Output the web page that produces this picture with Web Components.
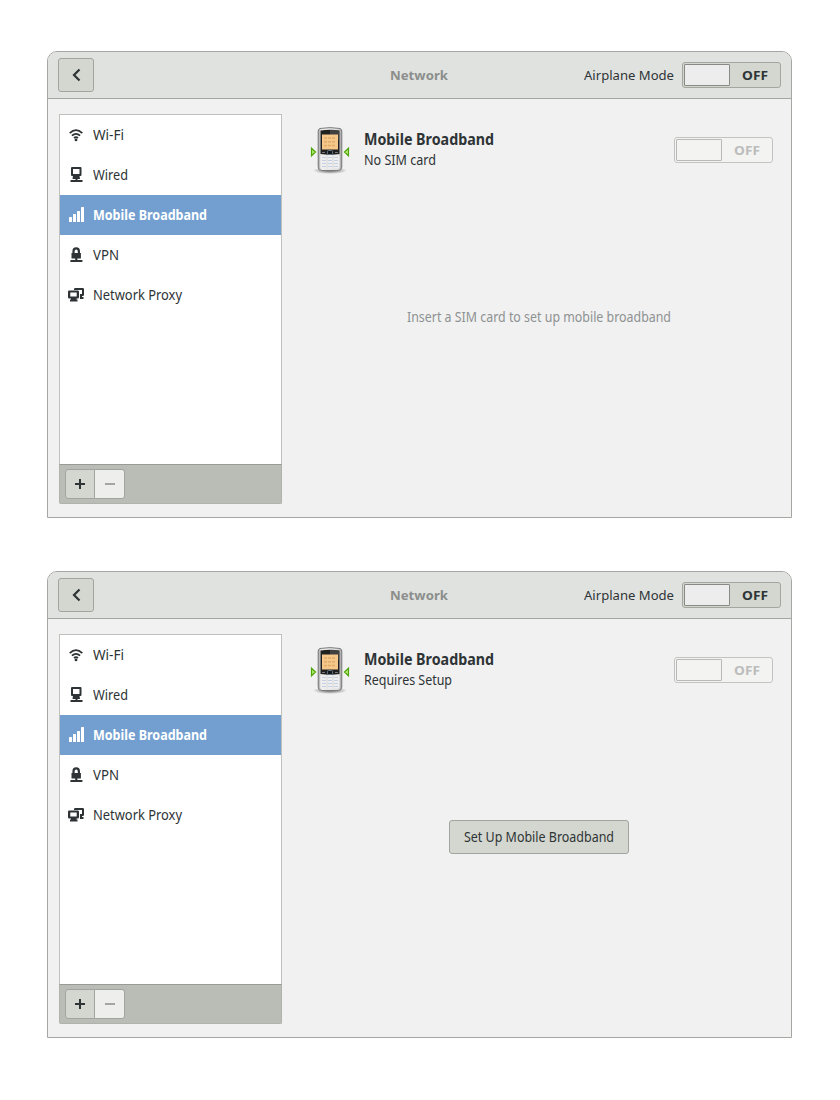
<!DOCTYPE html>
<html lang="en"><head><meta charset="utf-8"><title>Network</title>
<style>
body{margin:0;padding:51px 47px 0;background:#fff;font:13.5px/20px "Noto Sans","Open Sans",sans-serif;color:#2e3436;display:flex;flex-direction:column;gap:53px}
</style></head><body>
<net-window><fit-text slot="status" w="72">No SIM card</fit-text>
<fit-text slot="body" w="264" style="color:#8e9192">Insert a SIM card to set up mobile broadband</fit-text></net-window>
<net-window><fit-text slot="status" w="88">Requires Setup</fit-text>
<gtk-button slot="body" style="width:180px;height:34px"><fit-text w="150">Set Up Mobile Broadband</fit-text></gtk-button></net-window>
<script>
class Base extends HTMLElement{
  constructor(){super();this.attachShadow({mode:'open'}).innerHTML=this.constructor.html;}
}
/* Text drawn at a given advance width */
customElements.define('fit-text',class extends Base{
  static html=`<style>:host{display:block;white-space:nowrap;flex:none}span{display:inline-block;transform-origin:0 50%}</style><span><slot></slot></span>`;
  connectedCallback(){
    const s=this.shadowRoot.querySelector('span'),w=+this.getAttribute('w');
    this.style.width=w+'px';
    requestAnimationFrame(()=>{const n=s.offsetWidth;if(n)s.style.transform=`scaleX(${w/s.getBoundingClientRect().width})`;});
  }
});
customElements.define('gtk-button',class extends Base{
  static html=`<style>:host{display:flex;box-sizing:border-box;align-items:center;justify-content:center;border:1px solid #a1a5a0;border-radius:3px;background:#d4d7cf}</style><slot></slot>`;
});
customElements.define('gtk-switch',class extends Base{
  static html=`<style>
  :host{display:flex;box-sizing:border-box;width:99px;height:26px;border:1px solid #a3a79f;border-radius:3px;background:#d4d7cf;padding:1px;flex:none;align-items:center;font-weight:700;font-size:12.5px}
  i{box-sizing:border-box;width:46px;height:22px;border:1px solid #888a85;border-radius:1px;background:#ededed}
  fit-text{margin-left:11.5px;padding-top:2px}
  :host([disabled]){background:#f3f3f2;border-color:#c3c4c2;color:#bbbcbb}
  :host([disabled]) i{background:#f3f3f2;border-color:#b8bab7}
  </style><i></i><fit-text w="26">OFF</fit-text>`;
});
const icons={
wifi:`<path d="M1.700 6.100Q8 .2 14.300 6.100M3.900 8.700Q8 5 12.100 8.700M6 11Q8 9.300 10 11" fill="none" stroke="currentColor" stroke-width="1.800"/><circle cx="8" cy="12.900" r="1.400"/>`,
wired:`<path fill-rule="evenodd" d="M4 0h8.500Q13.500 0 13.500 1v7q0 1-1 1H4Q3 9 3 8V1Q3 0 4 0zM5 2v5h6.500V2z"/><path d="M5 8.500h6.500l.5 3.500H9.500V13h5v2h-12v-2h5v-1H4.500z"/>`,
signal:`<path d="M0 10.500q0-.5.5-.5h2q.5 0 .5.5V15H0zM4 7.500q0-.5.5-.5h2q.5 0 .5.5V15H4zM8 4.500q0-.5.5-.5h2q.5 0 .5.5V15H8zM12 .5q0-.5.5-.5h2q.5 0 .5.5V15h-3z" transform="translate(1)"/>`,
vpn:`<path fill-rule="evenodd" d="M3.500 6h.9V4.500a3.800 4.200 0 0 1 7.600 0V6h.9v5.500H9.400V13h5v2H2.400v-2h4.800v-1.500H3.500zM6.600 6h3.200V4.600a1.600 2 0 0 0-3.200 0z"/>`,
proxy:`<path fill-rule="evenodd" d="M1.200 3.500h8.600q1.200 0 1.200 1.200v5.600q0 1.200-1.200 1.200H8.500V12.500h1V14.500H2v-2h1V11.500H1.200Q0 11.500 0 10.300V4.700Q0 3.500 1.200 3.500zM2.300 5.500v4h6.400v-4z"/><path d="M6 3V2.200Q6 1 7.200 1h7.600Q16 1 16 2.200v5.600Q16 9 14.800 9H14v1h1.500v2H12V7h2V3z"/>`};
customElements.define('net-row',class extends Base{
  static html=`<style>:host{display:flex;height:40px;align-items:center;padding-left:8px;gap:8.500px}svg{width:16px;height:16px;fill:currentColor;flex:none}
  :host([selected]){background:#729fcf;color:#fff;font-weight:700}slot{display:block}</style><svg viewBox="0 0 16 16"></svg><slot></slot>`;
  connectedCallback(){this.shadowRoot.querySelector('svg').innerHTML=icons[this.getAttribute('icon')];}
});
customElements.define('phone-icon',class extends Base{
  static html=`<style>:host{display:block;width:40px;height:48px;flex:none}svg{display:block}</style>
  <svg width="40" height="48" viewBox="0 0 40 48"><defs>
  <linearGradient id="m"><stop stop-color="#999"/><stop offset=".13" stop-color="#eee"/><stop offset=".85" stop-color="#ddd"/><stop offset="1" stop-color="#999"/></linearGradient>
  <radialGradient id="s"><stop stop-color="#000" stop-opacity=".6"/><stop offset="1" stop-color="#000" stop-opacity="0"/></radialGradient></defs>
  <ellipse cx="20" cy="44.500" rx="17" ry="3.500" fill="url(#s)"/>
  <path d="M10 2.500Q20 .7 30 2.500Q31.800 3 31.800 5V41Q31.800 44.500 28 44.500H12Q8.200 44.500 8.200 41V5Q8.200 3 10 2.500z" fill="url(#m)" stroke="#7c7c7c"/>
  <path d="M10.500 4.500Q20 3 29.500 4.500V28Q20 29.500 10.500 28z" fill="#202020"/><path d="M20 4Q26 3.800 29 4.500V14L20 20z" fill="#555" opacity=".6"/>
  <rect x="12" y="8.500" width="16" height="15" fill="#f6c78a"/>
  <path d="M14 12h12M14 15.800h12M14 19.600h12" stroke="#dfab66" stroke-width="1.500" stroke-dasharray="3 1"/>
  <rect x="17.500" y="24.500" width="5" height="4" rx="1" fill="#15191c" stroke="#6d8595" stroke-width=".8"/><path d="M12 26.500h3M25 26.500h3" stroke="#777"/>
  <rect x="10.500" y="29" width="19" height="13.500" rx="1" fill="#efefef"/><path d="M12 31.500h4M18 31.500h4M24 31.500h4M12 34.500h4M18 34.500h4M24 34.500h4M12 37.500h4M18 37.500h4M24 37.500h4M12 40.500h4M18 40.500h4M24 40.500h4" stroke="#c5d0e2" stroke-width="1.200"/>
  <path d="M17 29v13.500M23 29v13.500" stroke="#cfcfcf" stroke-width=".7"/>
  <path d="M1.500 22.200V29.800L5.500 26zM38.500 22.200V29.800L34.500 26z" fill="#b4ec72" stroke="#4fa50c" stroke-width="1.200"/></svg>`;
});
customElements.define('net-window',class extends Base{
  static html=`<style>
  :host{display:flex;flex-direction:column;box-sizing:border-box;width:745px;height:467px;border:1px solid #a5a7a3;border-radius:10px 10px 0 0;background:#f1f1f1;overflow:hidden}
  header{box-sizing:border-box;height:47px;flex:none;display:grid;grid-template-columns:1fr 58px 1fr;align-items:center;background:#e0e2df;border-bottom:1px solid #a3a79f;padding:0 11px 0 10px}
  header gtk-button{width:36px;height:34px}
  .title{color:#8b8e8c;font-weight:700;font-size:13px}
  .air{display:flex;justify-content:flex-end;align-items:center;gap:8px;font-size:13px;margin-right:-1px}
  main{flex:1;display:flex;padding:15px 18px 13px 11px}
  aside{box-sizing:border-box;width:223px;height:390px;display:flex;flex-direction:column;flex:none}
  .list{box-sizing:border-box;height:350px;border:1px solid #bfc1bd;border-bottom:0;background:#fff}
  .bar{box-sizing:border-box;height:40px;background:#babdb6;border:1px solid #999c96;border-color:#999c96 #b0b3ac #b0b3ac;padding:4px 5px;display:flex;border-radius:0 0 2px 2px}
  .bar gtk-button{width:30px;height:30px}
  .bar gtk-button:first-child{border-radius:3px 0 0 3px}
  .bar gtk-button:last-child{border-left:0;border-radius:0 3px 3px 0;background:#eeeeec;color:#a4a6a4}
  section{flex:1;display:flex;flex-direction:column;padding:12px 0 0 28px}
  .head{display:flex;height:48px;align-items:flex-start}
  .info{flex:1;padding:3px 0 0 13.500px}
  .name{font-size:15.500px;font-weight:700;height:21px}
  .head gtk-switch{margin-top:11px}
  .body{height:80px;margin:103px 0 0 0;width:458px;display:flex;align-items:center;justify-content:center}
  svg{display:block;fill:none;stroke:currentColor;stroke-width:2}
  </style>
  <header><gtk-button><svg width="16" height="16"><path d="M11.500 2.500L6 8l5.500 5.500" stroke-width="2.200"/></svg></gtk-button><fit-text class="title" w="58">Network</fit-text>
  <div class="air"><fit-text w="90">Airplane Mode</fit-text><gtk-switch></gtk-switch></div></header>
  <main><aside><div class="list">
  <net-row icon="wifi"><fit-text w="31">Wi-Fi</fit-text></net-row>
  <net-row icon="wired"><fit-text w="35">Wired</fit-text></net-row>
  <net-row icon="signal" selected><fit-text w="114">Mobile Broadband</fit-text></net-row>
  <net-row icon="vpn"><fit-text w="26">VPN</fit-text></net-row>
  <net-row icon="proxy"><fit-text w="89">Network Proxy</fit-text></net-row>
  </div><div class="bar"><gtk-button><svg width="10" height="10"><path d="M0 5h10M5 0v10"/></svg></gtk-button><gtk-button><svg width="10" height="10"><path d="M0 5h10"/></svg></gtk-button></div></aside>
  <section><div class="head"><phone-icon></phone-icon><div class="info"><fit-text class="name" w="130">Mobile Broadband</fit-text><slot name="status"></slot></div><gtk-switch disabled></gtk-switch></div>
  <div class="body"><slot name="body"></slot></div></section></main>`;
});
</script></body></html>
